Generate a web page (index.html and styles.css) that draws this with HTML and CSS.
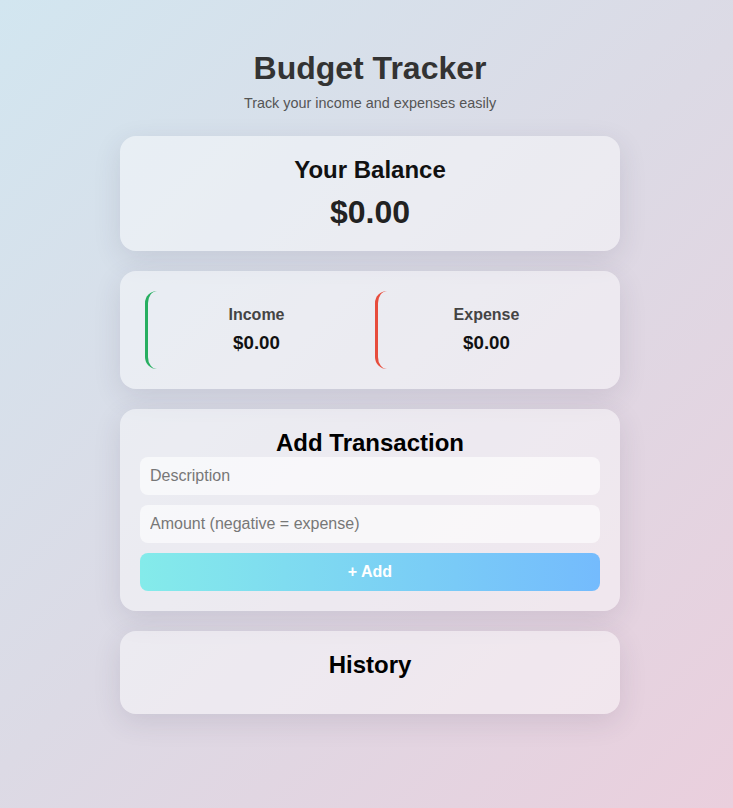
FILE: index.html
```html
<!DOCTYPE html>
<html lang="en">
<head>
<meta charset="UTF-8">
<title>Budget Tracker</title>
<link rel="stylesheet" href="styles.css">
</head>
<body>
<div class="app">
  <header class="header">
    <h1 class="title">Budget Tracker</h1>
    <p class="subtitle">Track your income and expenses easily</p>
  </header>

  <section class="card balance">
    <h2 class="card-title">Your Balance</h2>
    <div class="balance-amount">$0.00</div>
  </section>

  <section class="card summary">
    <div class="stat stat-income">
      <div class="stat-label">Income</div>
      <div class="stat-value">$0.00</div>
    </div>
    <div class="stat stat-expense">
      <div class="stat-label">Expense</div>
      <div class="stat-value">$0.00</div>
    </div>
  </section>

  <section class="card form-card">
    <h2 class="card-title">Add Transaction</h2>
    <form class="form">
      <input class="field" type="text" placeholder="Description">
      <input class="field" type="text" placeholder="Amount (negative = expense)">
      <button class="add-btn" type="button">+ Add</button>
    </form>
  </section>

  <section class="card history">
    <h2 class="card-title">History</h2>
    <ul class="history-list"></ul>
  </section>
</div>
</body>
</html>
```

FILE: styles.css
```css
* {
  box-sizing: border-box;
}

html, body {
  margin: 0;
  min-height: 100%;
}

body {
  font-family: "Liberation Sans", Arial, sans-serif;
  background: linear-gradient(135deg, #d2e6f0 0%, #dcdae5 50%, #eacfdd 100%);
  min-height: 808px;
  padding-left: 7px;
}

.app {
  width: 500px;
  margin: 0 auto;
  padding-top: 50px;
  padding-bottom: 40px;
}

.header {
  text-align: center;
  margin-bottom: 25px;
}

.title {
  margin: 0 0 8px;
  font-size: 32px;
  font-weight: bold;
  color: #333;
}

.subtitle {
  margin: 0;
  font-size: 14.4px;
  line-height: 16px;
  color: #555;
}

.card {
  background: rgba(255, 255, 255, 0.45);
  border-radius: 16px;
  box-shadow: 0 8px 28px rgba(60, 50, 80, 0.12);
  padding: 20px;
  margin-bottom: 20px;
}

.card-title {
  margin: 0;
  font-size: 24px;
  font-weight: bold;
  color: #000;
  text-align: center;
}

.balance {
  display: flex;
  flex-direction: column;
  align-items: center;
  gap: 10px;
  color: #222;
}

.balance .card-title {
  color: #111;
}

.balance-amount {
  font-size: 32px;
  font-weight: bold;
  color: #222;
}

.summary {
  display: flex;
  gap: 10px;
  padding: 20px 25px;
}

.stat {
  flex: 1;
  display: flex;
  flex-direction: column;
  align-items: center;
  gap: 8px;
  padding: 15px;
  border-left: 3px solid;
  border-radius: 12px;
}

.stat-income {
  border-left-color: #27ae60;
}

.stat-expense {
  border-left-color: #e74c3c;
}

.stat-label {
  font-size: 16px;
  font-weight: bold;
  color: #444;
}

.stat-value {
  font-size: 18.72px;
  font-weight: bold;
  color: #111;
}

.form {
  display: flex;
  flex-direction: column;
  gap: 10px;
}

.field {
  height: 38px;
  border: none;
  border-radius: 8px;
  background: rgba(255, 255, 255, 0.62);
  padding: 0 10px;
  font-family: "Liberation Sans", Arial, sans-serif;
  font-size: 16px;
  color: #333;
  outline: none;
}

.field::placeholder {
  color: #777;
}

.add-btn {
  height: 38px;
  border: none;
  border-radius: 8px;
  background: linear-gradient(90deg, #84ebea 0%, #74bbfd 100%);
  color: #fff;
  font-family: "Liberation Sans", Arial, sans-serif;
  font-size: 16px;
  font-weight: bold;
  cursor: pointer;
}

.history-list {
  list-style: none;
  margin: 15px 0 0;
  padding: 0;
}
```
